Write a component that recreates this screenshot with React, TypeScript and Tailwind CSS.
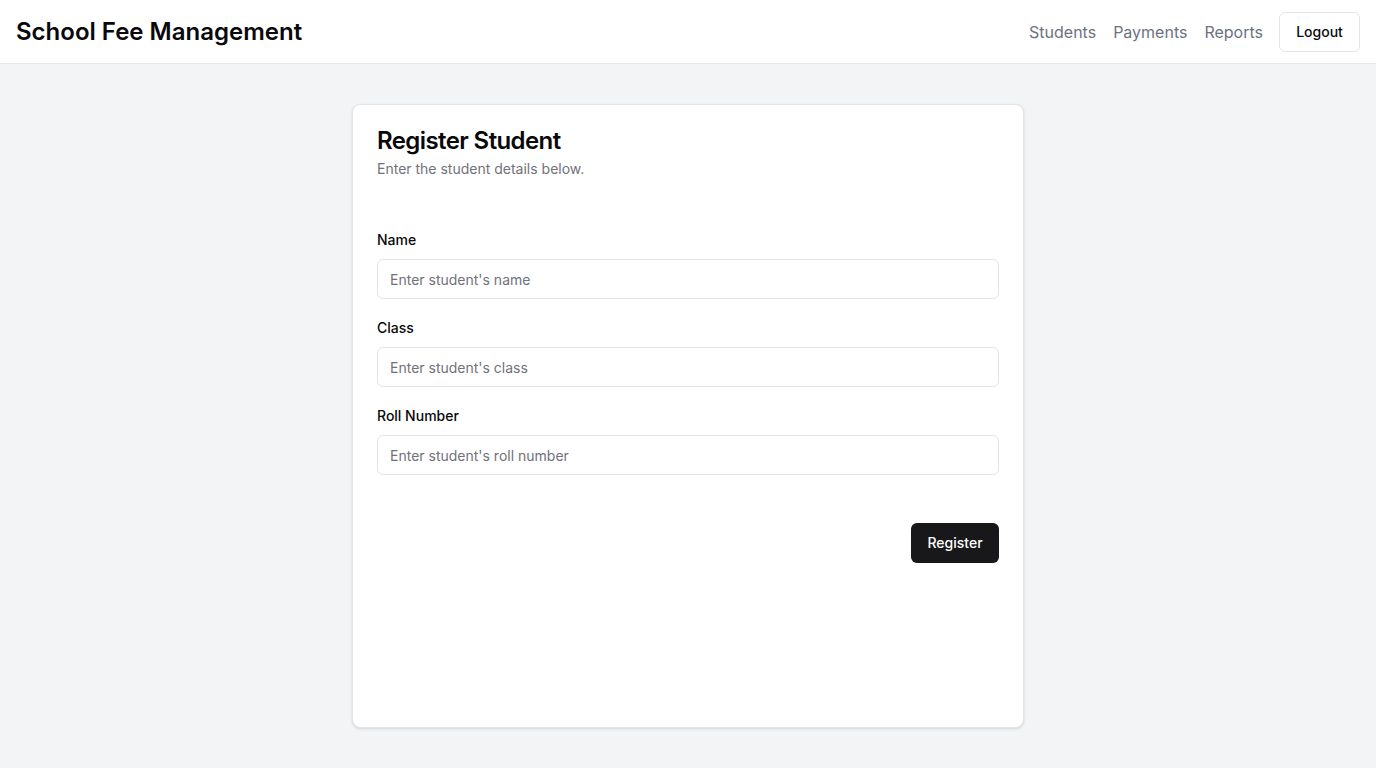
import React, { useState } from "react";

export default function App() {
  const [name, setName] = useState("");
  const [cls, setCls] = useState("");
  const [roll, setRoll] = useState("");

  const handleSubmit = (e: React.FormEvent) => {
    e.preventDefault();
  };

  return (
    <div className="min-h-screen flex flex-col bg-[#f3f4f6] font-['Inter','Noto_Sans',sans-serif] text-[#09090b]">
      <header className="h-16 shrink-0 bg-white border-b border-[#e5e7eb] flex items-center justify-between px-4">
        <h1 className="text-2xl font-semibold">School Fee Management</h1>
        <nav className="flex items-center gap-[17px]">
          <a className="text-base text-[#6b7280]" href="#">Students</a>
          <a className="text-base text-[#6b7280]" href="#">Payments</a>
          <a className="text-base text-[#6b7280]" href="#">Reports</a>
          <button className="h-10 w-[81px] -ml-px rounded-md border border-[#e4e4e7] bg-white text-sm font-medium">
            Logout
          </button>
        </nav>
      </header>

      <main className="flex-1 flex justify-center pt-10 pb-10">
        <section className="w-[672px] rounded-lg border border-[#e4e4e7] bg-white shadow-sm">
          <div className="p-6 pb-0">
            <h2 className="text-2xl font-semibold leading-none tracking-tight">Register Student</h2>
            <p className="mt-1.5 text-sm text-[#71717a]">Enter the student details below.</p>
          </div>
          <form onSubmit={handleSubmit} className="px-6 pt-[51px]">
            <div>
              <label className="block text-sm font-medium leading-5 mb-[9px]">Name</label>
              <input
                value={name}
                onChange={(e) => setName(e.target.value)}
                placeholder="Enter student's name"
                className="h-10 w-full rounded-md border border-[#e4e4e7] px-3 text-sm placeholder:text-[#71717a] outline-none"
              />
            </div>
            <div className="mt-[19px]">
              <label className="block text-sm font-medium leading-5 mb-[9px]">Class</label>
              <input
                value={cls}
                onChange={(e) => setCls(e.target.value)}
                placeholder="Enter student's class"
                className="h-10 w-full rounded-md border border-[#e4e4e7] px-3 text-sm placeholder:text-[#71717a] outline-none"
              />
            </div>
            <div className="mt-[19px]">
              <label className="block text-sm font-medium leading-5 mb-[9px]">Roll Number</label>
              <input
                value={roll}
                onChange={(e) => setRoll(e.target.value)}
                placeholder="Enter student's roll number"
                className="h-10 w-full rounded-md border border-[#e4e4e7] px-3 text-sm placeholder:text-[#71717a] outline-none"
              />
            </div>
            <div className="flex justify-end pt-12">
              <button
                type="submit"
                className="h-10 w-[88px] rounded-md bg-[#18181b] text-sm font-medium text-white"
              >
                Register
              </button>
            </div>
          </form>
        </section>
      </main>
    </div>
  );
}
